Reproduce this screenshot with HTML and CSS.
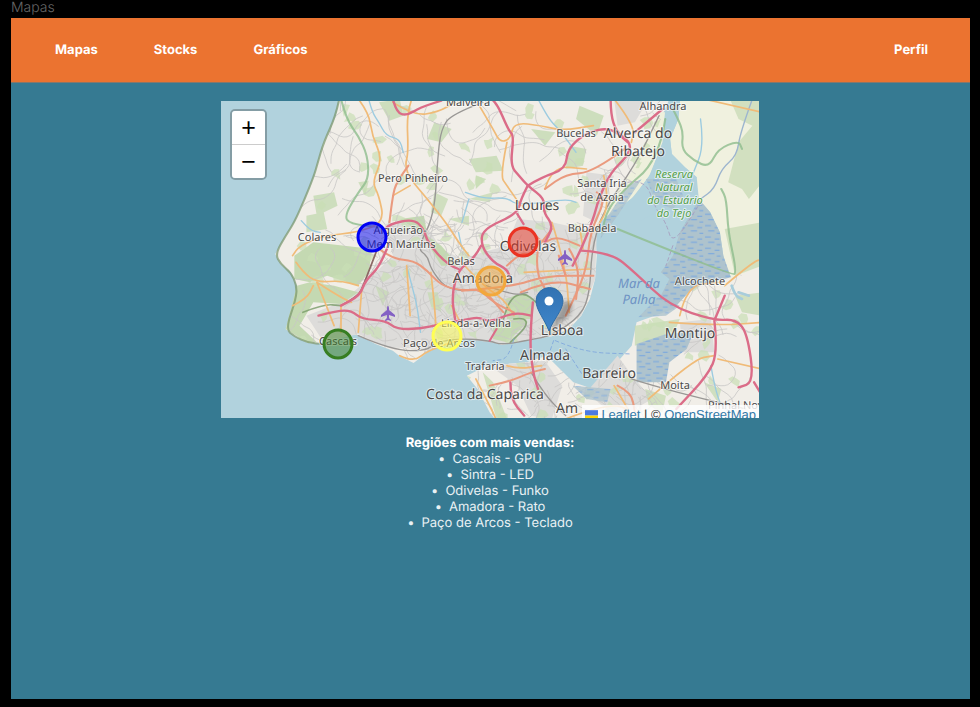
FILE: index.html
```html
<!DOCTYPE html>
<html lang="pt">
<head>
<meta charset="utf-8">
<meta name="viewport" content="width=device-width, initial-scale=1">
<title>Mapas</title>
<link rel="stylesheet" href="styles.css">
</head>
<body>
<p class="frame-title">Mapas</p>
<div class="frame">
  <header class="topbar">
    <nav class="nav">
      <a href="#mapas">Mapas</a>
      <a href="#stocks">Stocks</a>
      <a href="#graficos">Gráficos</a>
    </nav>
    <a class="profile" href="#perfil">Perfil</a>
  </header>
  <main class="content">
    <div class="map">
      <svg class="map-canvas" viewBox="0 0 538 317" role="img" aria-label="Lisboa">
        <defs>
          <pattern id="marsh" width="50" height="34" patternUnits="userSpaceOnUse">
            <rect width="50" height="34" fill="#aec3cd"/>
            <path d="M3 6h17M31 12h14M12 22h18M37 29h11" stroke="#6ba0e4" stroke-width="2.6"/>
          </pattern>
          <linearGradient id="pin" x1="0" y1="0" x2="0" y2="1">
            <stop offset="0" stop-color="#3272b2"/><stop offset="1" stop-color="#3f86cb"/>
          </linearGradient>
          <filter id="soft"><feGaussianBlur stdDeviation="2"/></filter>
          <clipPath id="land">
            <path d="M345 0L335 50 300 130 283 190 272 230 245 300 215 370 190 410 160 465 175 495 205 520 222 560 220 600 190 690 215 712 255 732 300 735 345 705 400 708 450 735 500 755 520 772 560 792 600 760 650 735 700 718 780 725 815 738 900 722 960 712 1010 690 1045 650 1070 600 1085 540 1090 470 1085 400 1100 360 1150 310 1190 250 1220 190 1250 130 1275 60 1300 0Z"/>
            <path d="M714 830L772 800 887 790 945 770 974 800 1022 850 1080 870 1118 810 1157 780 1205 850 1330 820 1350 730 1191 740 1205 670 1311 630 1369 565 1475 540 1568 500V966H800L780 940 745 870Z"/>
          </clipPath>
        </defs>
        <rect width="538" height="317" fill="#b1d2dd"/>
        <g transform="translate(-1 -2) scale(.3457 .3333)" fill="none" stroke-linejoin="round" stroke-linecap="round">
          <g fill="#f1eee8">
            <path d="M345 0L335 50 300 130 283 190 272 230 245 300 215 370 190 410 160 465 175 495 205 520 222 560 220 600 190 690 215 712 255 732 300 735 345 705 400 708 450 735 500 755 520 772 560 792 600 760 650 735 700 718 780 725 815 738 900 722 960 712 1010 690 1045 650 1070 600 1085 540 1090 470 1085 400 1100 360 1150 310 1190 250 1220 190 1250 130 1275 60 1300 0Z"/>
            <path d="M714 830L772 800 887 790 945 770 974 800 1022 850 1080 870 1118 810 1157 780 1191 740 1205 670 1311 630 1369 565 1475 530 1568 500V966H800L780 940 745 870Z"/>
            <path fill="#f0f1df" d="M1331 0L1326 60 1302 120 1307 165 1345 205 1379 235 1385 300 1418 340 1446 400 1456 470 1475 540 1568 500V0Z"/>
            <path fill="#eef0dc" d="M1288 40L1282 130 1240 235 1190 300 1120 350 1100 370 1120 310 1190 220 1240 110 1275 40Z"/>
            <path fill="#b1d2dd" d="M1288 30L1330 0 1326 60 1302 120 1307 165 1345 205 1379 235 1340 300 1150 400 1140 340 1200 290 1245 225 1280 130Z"/>
          </g>
          <g fill="#dddcda">
            <path d="M480 375L560 360 610 400 640 450 700 480 760 460 830 440 860 360 960 370 1090 400 1085 540 1045 650 960 712 815 735 700 718 600 750 480 745 400 705 300 730 250 650 350 610 430 540 500 470Z"/>
            <path d="M780 800L940 785 990 860 960 960 900 950 860 860ZM1060 880L1150 770 1200 840 1250 900 1150 960ZM1330 670L1420 660 1430 760 1340 760ZM1060 220L1140 230 1090 370 1050 350ZM1140 0H1240L1200 70 1150 80Z"/>
          </g>
          <g fill="#c4d9b2">
            <path d="M215 470L270 430 360 440 440 450 430 520 400 560 310 530 260 550 215 540Z"/>
            <path d="M222 560L260 550 330 560 400 580 350 615 270 610 230 680 280 730 255 732 190 690Z"/>
            <path d="M825 600L880 580 912 610 900 660 830 660ZM790 680L880 650 890 670 830 730 790 720ZM520 360L590 350 600 410 640 440 690 500 640 500 580 400Z"/>
            <path d="M1475 0H1568V250L1530 300 1510 270 1470 250 1500 130 1540 80 1500 60ZM1460 390L1568 370V500L1490 530Z" opacity=".7"/>
            <path d="M720 180L800 170 820 215 740 220ZM620 70L670 90 640 130 600 120ZM270 290L330 280 340 320 280 350ZM250 350L300 340 310 390 250 400ZM460 10L520 0 530 50 490 65ZM740 230L770 240 740 270ZM1040 20L1110 50 1090 110 1030 60ZM900 90L970 100 940 140ZM1010 140L1060 150 1050 200 1000 210Z" opacity=".8"/>
            <path d="M400 250L430 245 420 290ZM620 280L660 300 640 350 610 340ZM720 300L790 280 780 310ZM660 360L720 350 720 380ZM450 560L490 580 470 620ZM600 580L630 580 640 640 610 620ZM760 820L800 960 830 960 790 850ZM1200 680L1330 660 1310 710 1200 740ZM1230 870L1290 890 1280 940 1240 920ZM1490 590L1568 580V650L1510 640ZM1400 850L1450 870 1440 910Z" opacity=".75"/>
          </g>
          <g clip-path="url(#land)">
            <g id="greens" fill="#c9dfb6" opacity=".7"></g>
            <g id="minor" class="curved" stroke="#c9c7c6" stroke-width="2.4"></g>
          </g>
          <g fill="url(#marsh)">
            <path d="M1385 300L1418 340 1446 400 1456 470 1478 535 1369 565 1311 630 1270 600 1300 540 1275 520 1310 470 1330 400 1370 330Z"/>
            <path d="M1205 735L1290 705 1370 700 1350 750 1300 790 1290 850 1205 850Z"/>
            <path d="M1232 240H1320L1340 290 1310 330 1260 310 1245 270ZM1180 260L1220 240 1150 350 1100 420 1110 370Z" opacity=".8"/>
            <path d="M1020 860L1130 870 1120 910 1060 900ZM1210 655L1270 590 1330 620 1290 650Z" opacity=".8"/>
          </g>
          <g class="curved">
          <g stroke="#9ccbe0" stroke-width="4">
            <path d="M430 0L440 40 460 70 480 110 520 120 530 160M1390 60L1400 140 1370 220 1350 270M235 365L260 395 290 400M540 500L555 560 570 620 580 700M710 280L760 300 830 295 860 320 1000 300 1030 310M720 300L700 370M690 400L700 450M1420 800L1440 920 1480 940M920 0L950 60 980 90 1030 160"/>
            <path d="M1540 0L1505 100 1495 170 1450 210 1430 270 1390 300" stroke="#9db5cf"/>
          </g>
          <path d="M1480 560L1490 590 1510 600M1500 580L1530 590" stroke="#a8cddb" stroke-width="8"/>
          <g stroke="#8fbd8d" stroke-width="6" opacity=".8">
            <path d="M350 0L365 60 400 110 427 170 430 240 400 280 360 350 375 375 470 385"/>
            <path d="M1310 30L1325 60 1340 100 1335 150 1370 185 1415 205 1440 150 1500 125 1510 150M1150 390L1480 530 1495 520 1470 400 1465 300 1450 270M1288 60L1280 120 1240 210 1180 260 1120 330 1105 400"/>
            <path d="M240 640L300 615 350 620M820 660L835 600 880 580 915 610M850 660L880 655 890 680 840 730" stroke="#789b68" stroke-width="5"/>
          </g>
          <path d="M345 0L335 50 300 130 283 190 272 230 245 300 215 370 190 410 160 465 175 495 205 520 222 560 220 600 190 690 215 712 255 732 300 735" stroke="#78946a" stroke-width="6" opacity=".7"/>
          <g stroke="#999795" stroke-width="4">
            <path d="M760 10L670 45 640 90 630 170 620 350 570 450 600 470 610 510 650 565 700 575M400 710L500 755 600 755 620 730 700 718 780 725 815 738 900 722 960 710 1045 650 1070 580 1075 450 1110 330 1200 200 1270 50M1190 840L1250 860 1400 900 1520 930M900 820L940 890 1000 950M770 560L850 590 890 580"/>
            <path d="M455 450L415 560 400 590 350 620" stroke="#8b6864" stroke-width="5"/>
          </g>
          <g stroke="#f0bb78" stroke-width="5">
            <path d="M400 0L430 40 440 110 470 180 440 250 460 290 475 370 400 400 300 410 230 440 210 470"/>
            <path d="M555 0L540 40 545 160 535 200 550 240 600 300 660 380 690 430 720 470"/>
            <path d="M500 10L560 50 630 40 680 10M750 20L790 90 810 130 840 120 850 70 930 80 990 95 1080 80M830 130L810 230 830 260 870 320M220 490L240 520 280 550 350 545 400 560M280 550L300 600 330 680M280 550L340 590 380 610M210 620L250 600 270 560M350 620L350 700M410 570L400 700"/>
            <path d="M500 290L550 260M540 500L550 650M610 520L620 610 625 690M670 620L700 680M690 480L760 560 820 600 850 650M880 520L1070 510M960 370L1000 500 1010 640M940 270L960 200 1060 210M1140 0L1200 80 1190 130M1330 650L1350 560 1440 550M1300 670L1440 680 1568 670M1440 780L1568 810M1240 900L1370 780 1430 770M1460 560L1540 490 1568 480M1400 0L1568 40M740 840L790 940 800 966M1000 960L1150 900 1200 966M1140 860L1180 930"/>
            <path d="M520 770L560 790 600 755 700 720M830 800L860 810 930 800M1110 230L1130 320 1080 400M1040 380L1050 450"/>
          </g>
          <g stroke="#ea9a7e" stroke-width="6">
            <path d="M545 200L510 250 500 290 490 370M460 450L500 480 560 485 600 515 640 560 700 575 750 570 790 610 850 640M700 575L840 565 940 530 1080 530M870 580L960 540 1070 570M900 390L930 440 970 410 1040 440M1090 280L1120 290 1070 400 1060 520 1000 650M920 450L910 520 960 600 950 680M980 470L1000 530M1170 150L1080 220 1000 225 940 270M830 500L870 460 900 470 960 390"/>
            <path d="M780 860L830 850 900 820 940 810M1150 860L1190 880 1200 940M760 570L820 640M1010 450L1040 500 1030 600"/>
          </g>
          <g stroke="#db6c88" stroke-width="7">
            <path d="M500 0L510 40 540 50 580 25 640 5M785 0L800 10 835 95 850 110 840 200 865 230 890 260 940 300 935 340 965 380 940 430M890 260L930 235 1000 210 1005 150 1060 100 1130 85 1180 130M1130 0L1130 85 1190 130 1180 170 1130 220 1095 300 1080 360 1045 450 1020 500M1280 30L1200 100"/>
            <path d="M890 260L870 300 860 345 760 390 755 440 790 490 830 510 840 540M860 345L878 375M755 440L735 480 690 510 670 590 680 660M690 510L660 500 600 430 590 390 560 360 490 375 470 400M490 430L465 500 420 545 405 590 350 620M285 650L340 635 380 635 410 660 480 665 510 690 580 690 640 675 720 660 750 655 780 670 850 640 900 650"/>
            <path d="M905 610L895 720 905 820 920 870M840 850L840 900 880 950M1045 455L1130 460 1200 520 1300 620 1430 665 1490 660 1525 700 1545 850 1500 865M1545 850L1568 890M1430 665L1460 590M1430 665L1440 760 1410 830 1320 930"/>
            <path d="M780 725L800 690" stroke-width="6"/>
          </g>
          <g stroke="#7da5dd" stroke-width="2.5" stroke-dasharray="10 9">
            <path d="M850 720L835 780 790 785M965 725L950 770M970 725L1050 760 1190 765M1000 750L1050 830"/>
            <path d="M1180 250L1230 240 1260 330 1290 370 1310 440 1390 310M1310 440L1290 500" stroke="#a69bbd"/>
          </g>
          </g>
        </g>
        <g fill="#8461c4">
          <path id="plane" d="M344 149c1 0 1 2 1 4l6 5v2l-6-2v3l2 2v1l-3-1-3 1v-1l2-2v-3l-6 2v-2l6-5c0-2 0-4 1-4Z"/>
          <use href="#plane" x="-177" y="56"/>
        </g>
        <g class="labels">
          <g class="town">
            <text x="247" y="5">Malveira</text><text x="442" y="9">Alhandra</text>
            <text x="355" y="36">Bucelas</text><text x="192" y="81">Pero Pinheiro</text>
            <text x="381" y="86">Santa Iria</text><text x="381" y="100">de Azoia</text>
            <text x="371" y="131">Bobadela</text><text x="96" y="140">Colares</text>
            <text x="179" y="133">Algueirão-</text><text x="180" y="147">Mem Martins</text>
            <text x="240" y="164">Belas</text><text x="117" y="244">Cascais</text>
            <text x="255" y="226">Linda-a-Velha</text><text x="218" y="246">Paço de Arcos</text>
            <text x="264" y="269">Trafaria</text><text x="479" y="184">Alcochete</text>
            <text x="454" y="288">Moita</text><text x="518" y="308">Pinhal Novo</text>
          </g>
          <g class="city">
            <text x="417" y="37">Alverca do</text><text x="417" y="55">Ribatejo</text>
            <text x="316" y="109">Loures</text><text x="307" y="150">Odivelas</text>
            <text x="262" y="182">Amadora</text><text x="341" y="234">Lisboa</text>
            <text x="324" y="259">Almada</text><text x="388" y="277">Barreiro</text>
            <text x="469" y="237">Montijo</text><text x="264" y="298">Costa da Caparica</text>
            <text x="346" y="312">Am</text>
          </g>
          <g class="reserve">
            <text x="453" y="77">Reserva</text><text x="453" y="90">Natural</text>
            <text x="454" y="103">do Estuário</text><text x="453" y="116">do Tejo</text>
          </g>
          <g class="sea"><text x="418" y="187">Mar da</text><text x="418" y="203">Palha</text></g>
        </g>
        <g class="circles">
          <circle cx="151" cy="136" r="14" stroke="#0000f5" fill="#0000f5"/>
          <circle cx="302" cy="141" r="14" stroke="#eb3323" fill="#eb3323"/>
          <circle cx="270" cy="180" r="14" stroke="#f2a83b" fill="#f2a83b"/>
          <circle cx="226" cy="235" r="14" stroke="#ffff54" fill="#ffff54"/>
          <circle cx="117" cy="243" r="14" stroke="#377e22" fill="#377e22"/>
        </g>
        <path d="M329 229l13-27q8-4 9 3 0 8-10 15Z" fill="#000" opacity=".3" filter="url(#soft)"/>
        <path d="M328 230C324 219 315 209 315 200a13.500 13.500 0 0 1 27 0C342 209 332 219 328 230Z" fill="url(#pin)" stroke="#2e6da8"/>
        <circle cx="328" cy="200" r="4.500" fill="#fff"/>
      </svg>
      <div class="zoom">
        <button type="button" aria-label="Zoom in">+</button>
        <button type="button" aria-label="Zoom out">−</button>
      </div>
      <div class="attribution">
        <svg class="flag" viewBox="0 0 12 8" aria-hidden="true"><path fill="#4c7be1" d="M0 0h12v5H0z"/><path fill="#ffd500" d="M0 5h12v3H0z"/></svg>
        <a href="#leaflet">Leaflet</a> | © <a href="#osm">OpenStreetMap</a>
      </div>
    </div>
    <section class="sales">
      <h1>Regiões com mais vendas:</h1>
      <ul>
        <li>Cascais - GPU</li>
        <li>Sintra - LED</li>
        <li>Odivelas - Funko</li>
        <li>Amadora - Rato</li>
        <li>Paço de Arcos - Teclado</li>
      </ul>
    </section>
  </main>
</div>
<script src="map.js"></script>
</body>
</html>
```
FILE: styles.css
```css
* { box-sizing: border-box; }
body {
  margin: 0;
  min-height: 100vh;
  padding: 0 10px 8px 11px;
  display: flex;
  flex-direction: column;
  background: #000;
  font: 13px/16px Inter, "Liberation Sans", sans-serif;
  text-rendering: geometricPrecision;
  color: #fff;
}
.frame-title { margin: 0; height: 18px; font-size: 14px; line-height: 15px; font-weight: 300; color: #666; }
.frame { flex: 1; background: #367a92; }
.topbar {
  display: flex;
  align-items: center;
  justify-content: space-between;
  height: 65px;
  padding: 0 42px 0 44px;
  background: #eb7330;
  border-bottom: 1px solid #85776b;
  font-weight: 700;
}
.topbar a { color: #fff; text-decoration: none; }
.nav { display: flex; gap: 56px; }
.content { padding: 18px 17px 18px 16px; }
.map { position: relative; width: 100%; max-width: 538px; margin: 0 auto; overflow: hidden; }
.map-canvas { display: block; width: 100%; height: auto; }
.labels {
  font-family: "Noto Sans", sans-serif;
  text-anchor: middle;
  fill: #4b4948;
  stroke: rgba(255, 255, 255, .6);
  stroke-width: 2px;
  paint-order: stroke;
  stroke-linejoin: round;
}
.town { font-size: 11px; }
.city { font-size: 14px; }
.reserve { font-size: 11px; font-style: italic; fill: #55a04a; }
.sea { font-size: 13px; font-style: italic; fill: #6f93c4; stroke: none; }
.circles { stroke-width: 3px; fill-opacity: .5; }
.zoom {
  position: absolute;
  top: 8px;
  left: 9px;
  width: 37px;
  border: 2px solid rgba(0, 0, 0, .25);
  border-radius: 5px;
  background-clip: padding-box;
}
.zoom button {
  display: block;
  width: 100%;
  height: 33px;
  padding: 0;
  border: 0;
  background: #fff;
  color: #000;
  font: 400 25px/33px "Liberation Sans", sans-serif;
}
.zoom button:first-child { height: 34px; border-bottom: 1px solid #ccc; border-radius: 3px 3px 0 0; }
.zoom button:last-child { border-radius: 0 0 3px 3px; }
.attribution {
  position: absolute;
  right: 0;
  bottom: 0;
  height: 13px;
  padding: 0 3px;
  overflow: hidden;
  white-space: nowrap;
  background: rgba(255, 255, 255, .8);
  color: #333;
  font: 13px/19px "Liberation Sans", sans-serif;
}
.attribution a { color: #3178a8; }
.flag { width: 13px; height: 9px; }
.sales { margin-top: 17px; text-align: center; }
.sales h1 { margin: 0; font-size: 13px; line-height: 16px; font-weight: 700; }
.sales ul { margin: 0; padding: 0; list-style: none; color: #e9f1f4; }
.sales li::before { content: "•"; margin-right: 7px; }
```
FILE: map.js
```js
// Seeded generator so the street texture is the same on each load.
let seed = 7;
function rnd() {
  seed = (seed * 16807) % 2147483647;
  return seed / 2147483647;
}
const NS = "http://www.w3.org/2000/svg";
function add(parent, d) {
  const p = document.createElementNS(NS, "path");
  p.setAttribute("d", d);
  document.getElementById(parent).appendChild(p);
}
function street(x, y, steps, len) {
  let a = rnd() * 6.28;
  let d = "M" + x.toFixed(0) + " " + y.toFixed(0);
  for (let i = 0; i < steps; i++) {
    a += (rnd() - 0.5) * 1.4;
    x += Math.cos(a) * len;
    y += Math.sin(a) * len;
    d += "L" + x.toFixed(0) + " " + y.toFixed(0);
  }
  add("minor", d);
}
for (let i = 0; i < 170; i++) street(200 + rnd() * 1368, rnd() * 966, 9, 20);
// Denser streets in the built-up belt and on the south bank.
for (let i = 0; i < 220; i++) street(400 + rnd() * 680, 370 + rnd() * 370, 6, 11);
for (let i = 0; i < 70; i++) street(780 + rnd() * 450, 780 + rnd() * 180, 6, 11);
for (let i = 0; i < 170; i++) {
  const x = 230 + rnd() * 1338, y = rnd() * 966;
  let d = "";
  for (let k = 0; k < 7; k++) {
    const r = 6 + rnd() * 17, t = k * 0.9;
    d += (k ? "L" : "M") + (x + r * Math.cos(t)).toFixed(0) + " " + (y + r * Math.sin(t)).toFixed(0);
  }
  add("greens", d + "Z");
}

// Round the corners of every line: curve through the midpoints of its segments.
function curve(line) {
  const n = line.match(/-?\d+/g).map(Number);
  const last = n.length - 2;
  let d = "M" + n[0] + " " + n[1];
  for (let i = 2; i < last; i += 2) {
    d += "Q" + n[i] + " " + n[i + 1] + " " + (n[i] + n[i + 2]) / 2 + " " + (n[i + 1] + n[i + 3]) / 2;
  }
  return d + "L" + n[last] + " " + n[last + 1];
}
document.querySelectorAll(".curved path").forEach(function (p) {
  p.setAttribute("d", p.getAttribute("d").split("M").slice(1).map(curve).join(""));
});
```
